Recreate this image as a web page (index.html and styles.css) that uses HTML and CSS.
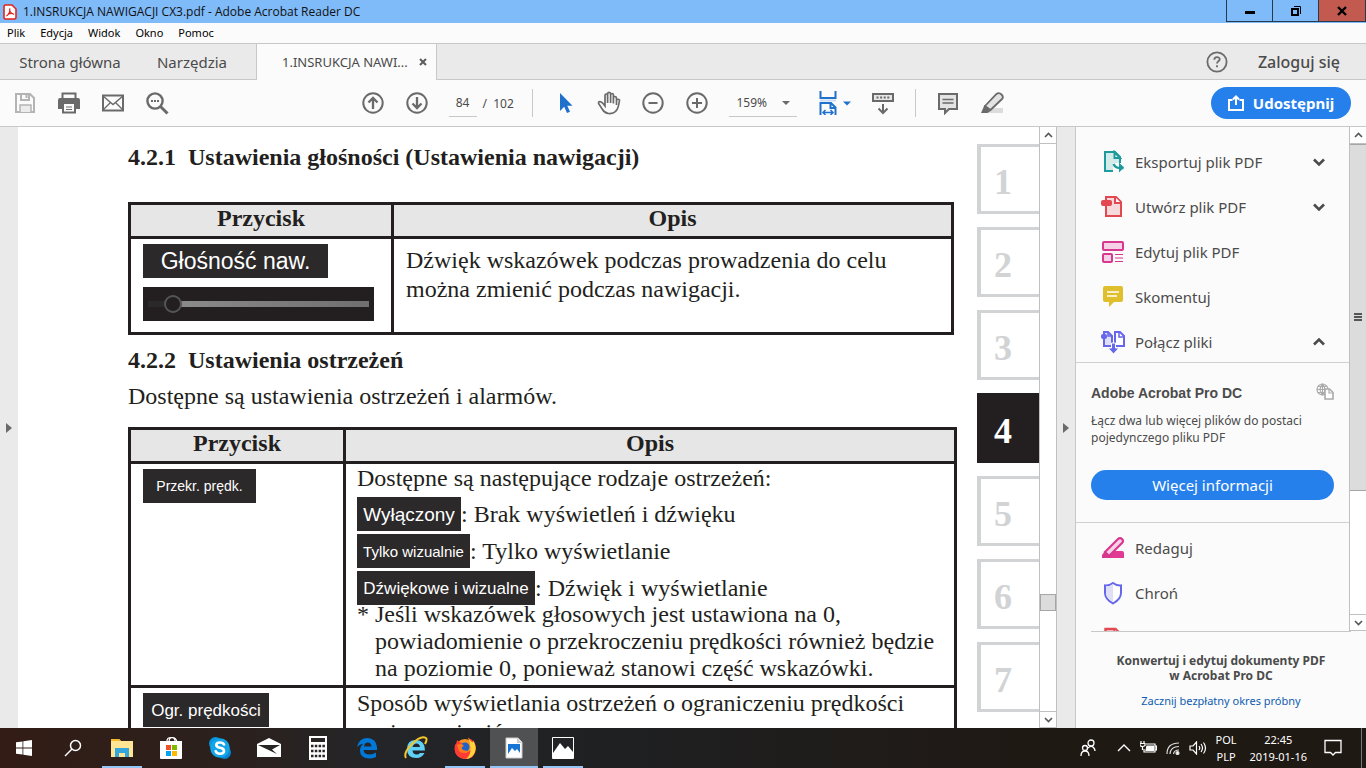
FILE: index.html
```html
<!DOCTYPE html>
<html lang="pl">
<head>
  <meta charset="UTF-8">
  <meta name="viewport" content="width=device-width, initial-scale=1.0">
  <title>1.INSRUKCJA NAWIGACJI CX3.pdf - Adobe Acrobat Reader DC</title>
  <link rel="stylesheet" href="styles.css">
</head>
<body>

  <!-- Pasek tytułu -->
  <header class="titlebar">
    <svg class="app-icon" width="14" height="16" viewBox="0 0 14 16"><path d="M2.5 1h6.500l4 4v8.500a1.500 1.500 0 0 1-1.500 1.500h-9A1.500 1.500 0 0 1 1 13.500v-11A1.500 1.500 0 0 1 2.500 1z" fill="#fff" stroke="#e2231a" stroke-width="1.600"/><path d="M3.500 12c3-2 3.500-5 3.300-7.500C6 7 8 10 11 10.200 8.500 9 5.500 9.500 3.500 12z" fill="none" stroke="#e2231a" stroke-width="1.200"/></svg>
    <span class="window-title">1.INSRUKCJA NAWIGACJI CX3.pdf - Adobe Acrobat Reader DC</span>
    <div class="window-buttons">
      <button aria-label="Minimalizuj"><svg width="12" height="12"><path d="M1 6h10v3H1z"/></svg></button>
      <button aria-label="Przywróć"><svg width="12" height="12" fill="none" stroke="#000"><path d="M2 4h6v6H2z" stroke-width="2"/><path d="M4 1.500h6.500V9"/></svg></button>
      <button class="close" aria-label="Zamknij"><svg width="12" height="12" stroke="#000" stroke-width="2.400"><path d="M2 2l8 8M10 2l-8 8"/></svg></button>
    </div>
  </header>

  <!-- Menu -->
  <nav class="menubar">
    <button>Plik</button>
    <button>Edycja</button>
    <button>Widok</button>
    <button>Okno</button>
    <button>Pomoc</button>
  </nav>

  <!-- Karty -->
  <div class="tabs">
    <button class="tab">Strona główna</button>
    <button class="tab tab-tools">Narzędzia</button>
    <div class="tab-active">
      <span>1.INSRUKCJA NAWI...</span>
      <button aria-label="Zamknij kartę"><svg width="8" height="8" stroke="#5c5c5c" stroke-width="2"><path d="M1 1l6 6M7 1L1 7"/></svg></button>
    </div>
    <div class="account">
      <button aria-label="Pomoc"><svg width="22" height="22" fill="none" stroke="#6b6b6b" stroke-width="1.800"><circle cx="11" cy="11" r="9.600"/><path d="M8.300 8.800c0-3.600 5.400-3.400 5.400-.5 0 2-2.700 2-2.700 4.200M11 14.200v2"/></svg></button>
      <button class="login">Zaloguj się</button>
    </div>
  </div>

  <!-- Pasek narzędzi -->
  <div class="toolbar">
    <div class="tools">
      <button aria-label="Zapisz"><svg width="24" height="24" fill="none" stroke="#b4b4b4" stroke-width="2"><path d="M3 3h14l4 4v14H3z"/><path d="M8 3v6h8V3M13.500 4v3"/><path d="M7 21v-7h11v7" fill="#ececec" stroke-width="1.500"/></svg></button>
      <button aria-label="Drukuj"><svg width="24" height="24"><path d="M5.500 7V2.500h13V7" fill="none" stroke="#6a6a6a" stroke-width="2"/><path d="M1 9q0-2 2-2h18q2 0 2 2v9h-4v-5H5v5H1z" fill="#6a6a6a"/><path d="M6 12h12v9.500H6z" fill="#fbfbfb" stroke="#6a6a6a" stroke-width="2"/><path d="M9 16h6M9 18.500h6" stroke="#6a6a6a"/></svg></button>
      <button aria-label="Wyślij"><svg width="24" height="24" fill="none" stroke="#6a6a6a"><path d="M2 4.500h20v15H2z" stroke-width="2"/><path d="M2 5l10 8.500L22 5M2 19l7.500-7.500M22 19l-7.500-7.500" stroke-width="1.400"/></svg></button>
      <button aria-label="Szukaj"><svg width="24" height="24" fill="none" stroke="#6a6a6a"><circle cx="10" cy="10" r="7.600" stroke-width="2.400"/><path d="M15.500 15.500l7 7" stroke-width="3"/><path d="M6 10h2M9 10h2M12 10h2" stroke-width="2"/></svg></button>
    </div>

    <div class="tools">
      <button aria-label="Poprzednia strona"><svg width="24" height="24" fill="none" stroke="#6a6a6a" stroke-width="2"><circle cx="12" cy="12" r="9.700"/><path d="M12 18V7M7.500 11.500L12 7l4.500 4.500" stroke-width="2.300"/></svg></button>
      <button aria-label="Następna strona"><svg width="24" height="24" fill="none" stroke="#6a6a6a" stroke-width="2"><circle cx="12" cy="12" r="9.700"/><path d="M12 6v11M7.500 12.500L12 17l4.500-4.500" stroke-width="2.300"/></svg></button>
      <div class="page-number">
        <input type="text" value="84" aria-label="Numer strony">
        <span>/&nbsp; 102</span>
      </div>
      <span class="separator"></span>
      <button aria-label="Zaznacz"><svg width="24" height="24"><path d="M7 2v18l4.200-4.200L14 22l3-1.300-2.700-5.900H19.500z" fill="#1f71cc"/></svg></button>
      <button aria-label="Rączka"><svg width="24" height="24" fill="#fbfbfb" stroke="#6a6a6a" stroke-width="1.700"><path d="M8 14V4.500q0-1.500 1.300-1.500t1.300 1.500V3q0-1.700 1.500-1.700T13.600 3v1q0-1.500 1.400-1.500T16.400 4v3q0-1.500 1.500-1.500t1.500 1.500L19.600 9q1.500-1.500 2.900 0-1 9-4 11.500-2.500 2.500-7 2-4-.5-6-4L1.700 12.700Q1 10.500 3 10.700 5 11 8 15zM10.600 4.500V12M13.600 4v8M16.400 6v6.500M19.500 8v6"/></svg></button>
      <button aria-label="Pomniejsz"><svg width="24" height="24" fill="none" stroke="#6a6a6a" stroke-width="2"><circle cx="12" cy="12" r="9.700"/><path d="M7.500 12h9"/></svg></button>
      <button aria-label="Powiększ"><svg width="24" height="24" fill="none" stroke="#6a6a6a" stroke-width="2"><circle cx="12" cy="12" r="9.700"/><path d="M7 12h10M12 7v10"/></svg></button>
      <div class="zoom">
        <select aria-label="Powiększenie"><option>159%</option></select>
      </div>
      <button class="fit" aria-label="Dopasuj szerokość"><svg width="36" height="24" fill="none" stroke="#1f71cc" stroke-width="2"><path d="M4.500 0v7h15V0M4.500 24V12H15l4.500 4.500V24M14.500 12v5h5"/><path d="M4 9.500h16" stroke="#c9def5"/><path d="M7 21.500h10M9.500 19L7 21.500 9.500 24M14.500 19l2.500 2.500-2.500 2.500" stroke-width="1.500"/><path d="M27 10.500h8L31 14.500z" fill="#1f71cc" stroke="none"/></svg></button>
      <button aria-label="Przewijanie"><svg width="24" height="24" fill="none" stroke="#6a6a6a" stroke-width="2"><rect x="2" y="3" width="20" height="7" fill="#e6e6e6"/><path d="M5.500 6.500h13" stroke-dasharray="2 1.600"/><path d="M12 13v9M7.500 17.500L12 22l4.500-4.500"/></svg></button>
      <span class="separator"></span>
      <button aria-label="Komentarz"><svg width="24" height="24"><path d="M3 3h18v15h-8l-4 4v-4H3z" fill="#e3e3e3" stroke="#6a6a6a" stroke-width="2"/><path d="M6.500 8.500h11M6.500 12h11" stroke="#6a6a6a" stroke-width="1.500"/></svg></button>
      <button aria-label="Zakreślacz"><svg width="24" height="24"><path d="M12 17h11v5H6z" fill="#dcdcdc"/><path d="M5 15L16.500 3Q19 1 21.500 3.500T22 8L10.500 19z" fill="#e3e3e3" stroke="#6a6a6a" stroke-width="1.800"/><path d="M4.500 14l6 6-3 2H1z" fill="#6a6a6a"/></svg></button>
    </div>

    <button class="share">
      <svg width="16" height="16" fill="none" stroke="#fff" stroke-width="2"><path d="M4.500 5H1v10h14V5h-3.500M8 10V2M5 4.500l3-3 3 3"/></svg>
      Udostępnij
    </button>
  </div>

  <main class="workspace">
    <button class="side-strip" aria-label="Pokaż panel nawigacji"><span class="triangle"></span></button>

    <!-- Strona dokumentu -->
    <div class="page">
      <article class="manual">
        <h2><span class="section-number">4.2.1</span>Ustawienia głośności (Ustawienia nawigacji)</h2>
        <table class="table-volume">
          <thead>
            <tr><th class="col-button">Przycisk</th><th>Opis</th></tr>
          </thead>
          <tbody>
            <tr>
              <td>
                <span class="label label-volume">Głośność naw.</span>
                <input class="volume" type="range" value="8" aria-label="Głośność nawigacji">
              </td>
              <td class="volume-text">Dźwięk wskazówek podczas prowadzenia do celu można zmienić podczas nawigacji.</td>
            </tr>
          </tbody>
        </table>

        <h2><span class="section-number">4.2.2</span>Ustawienia ostrzeżeń</h2>
        <p class="intro">Dostępne są ustawienia ostrzeżeń i alarmów.</p>
        <table class="table-warnings">
          <thead>
            <tr><th class="col-button">Przycisk</th><th>Opis</th></tr>
          </thead>
          <tbody>
            <tr>
              <td><span class="label label-speed">Przekr. prędk.</span></td>
              <td>
                <p>Dostępne są następujące rodzaje ostrzeżeń:</p>
                <ul class="warning-types">
                  <li><span class="label label-off">Wyłączony</span>: Brak wyświetleń i dźwięku</li>
                  <li><span class="label label-visual">Tylko wizualnie</span>: Tylko wyświetlanie</li>
                  <li><span class="label label-both">Dźwiękowe i wizualne</span>: Dźwięk i wyświetlanie</li>
                </ul>
                <div class="note"><span>*</span><p>Jeśli wskazówek głosowych jest ustawiona na 0, powiadomienie o przekroczeniu prędkości również będzie na poziomie 0, ponieważ stanowi część wskazówki.</p></div>
              </td>
            </tr>
            <tr>
              <td><span class="label label-limit">Ogr. prędkości</span></td>
              <td class="limit-text">Sposób wyświetlania ostrzeżeń o ograniczeniu prędkości można zmienić.</td>
            </tr>
          </tbody>
        </table>
      </article>

      <nav class="chapters">
        <a href="#">1</a>
        <a href="#">2</a>
        <a href="#">3</a>
        <a href="#" class="current">4</a>
        <a href="#">5</a>
        <a href="#">6</a>
        <a href="#">7</a>
      </nav>
    </div>

    <div class="scrollbar">
      <button aria-label="W górę"><svg width="9" height="6" fill="none" stroke="#555" stroke-width="1.600"><path d="M1 5l3.500-3.500L8 5"/></svg></button>
      <span class="track-before"></span>
      <span class="thumb"></span>
      <span class="track-after"></span>
      <button aria-label="W dół"><svg width="9" height="6" fill="none" stroke="#555" stroke-width="1.600"><path d="M1 1l3.500 3.500L8 1"/></svg></button>
    </div>

    <button class="side-strip strip-right" aria-label="Ukryj panel narzędzi"><span class="triangle"></span></button>

    <!-- Panel narzędzi -->
    <aside class="panel">
      <div class="panel-scroll">
        <div class="panel-content">
          <ul class="tool-list">
            <li>
              <svg width="24" height="24" fill="none" stroke="#1d9a9b" stroke-width="2"><path d="M4 2h10l5 5v14H4z" fill="#d5ebe9"/><path d="M19 8h-5.500V2z" fill="#fff"/><path d="M12 13h12v10H12z" fill="#fbfbfb" stroke="none"/><path d="M4 21h8" /><path d="M12.500 14q2 4 6 4h4" stroke-width="2.400"/><path d="M18 12.500v10l5-5z" fill="#1d9a9b" stroke="none"/></svg>
              <button>Eksportuj plik PDF</button>
              <svg class="chevron" width="14" height="14" fill="none" stroke="#4b4b4b" stroke-width="2.600"><path d="M2 4.500l5 5 5-5"/></svg>
            </li>
            <li>
              <svg width="24" height="24" fill="none" stroke="#e34850" stroke-width="2"><path d="M5 10v11h15V7l-5-5H5z" fill="#f6d9da"/><path d="M14 2v6h6" fill="#fff"/><rect x="0" y="5" width="11" height="6" rx="2" fill="#e34850" stroke="none"/></svg>
              <button>Utwórz plik PDF</button>
              <svg class="chevron" width="14" height="14" fill="none" stroke="#4b4b4b" stroke-width="2.600"><path d="M2 4.500l5 5 5-5"/></svg>
            </li>
            <li>
              <svg width="24" height="24" fill="#f5d0e6" stroke="#d83790" stroke-width="2"><rect x="2" y="2" width="20" height="8" rx="1"/><rect x="2" y="14" width="9" height="8" rx="1"/><path d="M14 14.500h8M14 18h8M14 21.500h8" stroke-width="1.200"/></svg>
              <button>Edytuj plik PDF</button>
            </li>
            <li>
              <svg width="24" height="24"><path d="M4 1h16q2 0 2 2v12q0 2-2 2h-7l-5 5v-5H4q-2 0-2-2V3q0-2 2-2z" fill="#dfbf2b"/><path d="M6 7h12M6 11h10" stroke="#fff" stroke-width="1.500"/></svg>
              <button>Skomentuj</button>
            </li>
            <li>
              <svg width="24" height="24" fill="none" stroke="#6767ec" stroke-width="2"><path d="M3 2h4l4 4v10H3z" fill="#e0dff8"/><path d="M14 2h5l4 4v10h-9z" fill="#fff"/><path d="M18 2v5h5M7 2v4h4" stroke-width="1.500"/><rect x="0" y="4" width="6" height="5" rx="2" fill="#6767ec" stroke="none"/><path d="M10.500 13h4v5h3.500l-5.500 6L7 18h3.500z" fill="#6767ec" stroke="#fbfbfb" stroke-width="1"/></svg>
              <button>Połącz pliki</button>
              <svg class="chevron" width="14" height="14" fill="none" stroke="#4b4b4b" stroke-width="2.600"><path d="M2 9.500l5-5 5 5"/></svg>
            </li>
          </ul>

          <section class="promo">
            <div class="promo-head">
              <h3>Adobe Acrobat Pro DC</h3>
              <svg width="18" height="18" fill="none" stroke="#aaa" stroke-width="1.200"><circle cx="6.500" cy="6.500" r="5.500"/><path d="M1 6.500h11M2 3.500h9M2 9.500h7M6.500 1v11M6.500 1q-5 5.500 0 11M6.500 1q5 5.500 0 11"/><path d="M9 6h4.500L17 9.500V16H9z" fill="#fff" stroke-width="1.600"/><path d="M13 6v4h4"/></svg>
            </div>
            <p>Łącz dwa lub więcej plików do postaci pojedynczego pliku PDF</p>
            <button>Więcej informacji</button>
          </section>

          <ul class="tool-list">
            <li>
              <svg width="24" height="24"><path d="M14 15h7q2 0 2 2v5H5z" fill="#e03a94"/><path d="M4 16L17 3q2-2 4 0t0 4L8 20z" fill="#f7d1e5" stroke="#d83790" stroke-width="2.200"/><path d="M4 15l6 6-3 1H1v-3z" fill="#d83790"/></svg>
              <button>Redaguj</button>
            </li>
            <li>
              <svg width="24" height="24"><path d="M12 2q4 3 8 2.500V12q0 6-8 10.500Q4 18 4 12V4.500Q8 5 12 2z" fill="#fff" stroke="#6767ec" stroke-width="2"/><path d="M12 3v18Q5 17 5 12V5.500Q9 5.500 12 3z" fill="#e0dff8"/></svg>
              <button>Chroń</button>
            </li>
            <li>
              <svg width="24" height="24"><path d="M4.500 22V3h10l5 5v14z" fill="#f6d9da" stroke="#e34850" stroke-width="2.400"/><path d="M13.500 3v6h6" fill="#fff" stroke="#e34850" stroke-width="2"/></svg>
            </li>
          </ul>
        </div>
        <div class="scrollbar panel-bar">
          <button aria-label="W górę"><svg width="9" height="6" fill="none" stroke="#555" stroke-width="1.600"><path d="M1 5l3.500-3.500L8 5"/></svg></button>
          <span class="thumb"><svg width="8" height="8" stroke="#555" stroke-width="2"><path d="M0 1h8M0 4h8M0 7h8"/></svg></span>
          <span class="track-after"></span>
          <button aria-label="W dół"><svg width="9" height="6" fill="none" stroke="#555" stroke-width="1.600"><path d="M1 1l3.500 3.500L8 1"/></svg></button>
        </div>
      </div>
      <div class="trial">
        <strong>Konwertuj i edytuj dokumenty PDF<br>w Acrobat Pro DC</strong>
        <a href="#">Zacznij bezpłatny okres próbny</a>
      </div>
    </aside>
  </main>

  <!-- Pasek zadań -->
  <footer class="taskbar">
    <div class="apps">
      <button aria-label="Start"><svg width="16" height="16" fill="#fff"><path d="M0 2.300l6.500-.9v6.200H0zM7.300 1.300L16 0v7.600H7.300zM0 8.400h6.500v6.200L0 13.700zM7.300 8.400H16V16l-8.700-1.300z"/></svg></button>
      <button aria-label="Szukaj"><svg width="18" height="18" fill="none" stroke="#fff" stroke-width="1.500"><circle cx="11.500" cy="6.500" r="5"/><path d="M8 10l-7 7"/></svg></button>
      <button class="open" aria-label="Eksplorator plików"><svg width="22" height="20"><path d="M0 1h8l2 2h12v16H0z" fill="#ffe594"/><path d="M0 1h8l2 2H0z" fill="#f7b928"/><path d="M4 19v-9h14v9h-4v-4H8v4z" fill="#35a5dd"/></svg></button>
      <button aria-label="Sklep"><svg width="24" height="24"><path d="M8 8V5q0-3.500 4-3.500T16 5v3M10 6q0-4.500 3.500-4.500T18 6" fill="none" stroke="#fff" stroke-width="1.200"/><path d="M1 5h22v17q0 1-1 1H2q-1 0-1-1z" fill="#fff"/><path d="M7 9h5v5H7z" fill="#f05125"/><path d="M13 9h5v5h-5z" fill="#7fba00"/><path d="M7 15h5v5H7z" fill="#00a4ef"/><path d="M13 15h5v5h-5z" fill="#ffb900"/></svg></button>
      <button aria-label="Skype"><svg width="24" height="24"><circle cx="7.500" cy="7.500" r="6.500" fill="#0796dc"/><circle cx="16.500" cy="16.500" r="6.500" fill="#0784d4"/><circle cx="12" cy="12" r="9.800" fill="#12a5e8"/><path d="M16 8.500Q15 6.500 12 6.500 8.300 6.500 8.300 9q0 2 3.700 2.800 4 .7 4 3.200 0 2.700-4 2.700-3.300 0-4.300-2.500" fill="none" stroke="#fff" stroke-width="2.600" stroke-linecap="round"/></svg></button>
      <button aria-label="Poczta"><svg width="24" height="20"><path d="M0 6L12 0l12 6v13H0z" fill="#fff"/><path d="M1 7h22l-8 4.500 5 4.500z" fill="#292424"/></svg></button>
      <button aria-label="Kalkulator"><svg width="18" height="24"><path d="M0 0h18v24H0z" fill="#fff"/><path d="M2 2h14v4H2z" fill="#292424"/><path d="M2 10h14M2 15h14M2 20h14" stroke="#292424" stroke-width="2.500" stroke-dasharray="2.500 1.300"/></svg></button>
      <button aria-label="Edge"><svg width="22" height="22"><path d="M1 10Q3 1 11.500 1 20 1.500 21 10v3H7.500q.5 4.500 6 4.500 3.500 0 6.500-2v4.500q-3 1.500-7.500 1.500Q4 21 4 13.500q0-4 3.500-7Q3.500 7 1 10zM8 9.500h7.500Q15 5.500 11.800 5.500T8 9.500z" fill="#0078d7"/></svg></button>
      <button aria-label="Internet Explorer"><svg width="24" height="24"><path d="M3 13Q3 4 12 4q9 .5 9 10.500H8.500q.5 4 4 4 2.500 0 3.500-1.500h4.500Q18 22 12.500 22 3 22 3 13zm5.500-2H16q-.5-3.500-3.500-3.500T8.500 11z" fill="#5fd0f7"/><path d="M2 22Q-1 17 8 8T22 2q1.500 1.500-1 6" fill="none" stroke="#f5c62c" stroke-width="2"/></svg></button>
      <button class="open" aria-label="Firefox"><svg width="24" height="24"><circle cx="12" cy="13" r="10" fill="#f7931e"/><path d="M2 8q1 2 2-4 2 2 5 3l2 3-3 4 5 3 5-3q2-6-3-12 8 2 8 11-1 10-11 10Q2 22 1.500 13z" fill="#ff3b36"/><path d="M15 1q2 4 4 5t1-2q4 7 2 12-3 7-9 7 8-6 2-22z" fill="#ffd43a"/><circle cx="12" cy="11" r="4.500" fill="#1f62c9"/><path d="M4 9q4-3 7 1-4 1-1 4l5 1q-5 4-9 0z" fill="#ff7b1a"/></svg></button>
      <button class="open active" aria-label="Obraz"><svg width="18" height="22"><path d="M1 1h12l4 4v16H1z" fill="#fff" stroke="#ccc"/><path d="M12 1v5h5" fill="#ccc"/><path d="M3 7h12v11H3z" fill="#1574d4"/><path d="M3 17l4-6 3 3 2-2 3 4v2H3z" fill="#fff"/></svg></button>
      <button class="open" aria-label="Zdjęcia"><svg width="22" height="22"><path d="M.5.500h21v21H.500z" fill="#222326" stroke="#fff"/><path d="M1 16l7-10 5 6 3-3 5 6v6H1z" fill="#fff"/></svg></button>
    </div>
    <div class="tray">
      <svg width="16" height="18" fill="none" stroke="#fff" stroke-width="1.300"><circle cx="11" cy="4" r="3"/><circle cx="5" cy="9" r="2.500"/><path d="M1 17q0-5 4-5t4 5M8 9q3-3 5.500-.5Q15 10 15 12"/></svg>
      <svg width="14" height="10" fill="none" stroke="#fff" stroke-width="1.400"><path d="M1 8l6-6 6 6"/></svg>
      <svg width="17" height="14" fill="none" stroke="#fff" stroke-width="1.200"><path d="M6 3h9v8H4V8M15 5h1.500v4H15"/><path d="M7 5h6.500v4.500H6z" fill="#fff"/><path d="M1 0v2M4 0v2M0 2.500h5v2q-2.500 2-5 0zM2.500 5v4"/></svg>
      <svg width="14" height="14" fill="none" stroke="#ddd" stroke-width="1.200"><path d="M1 13Q1 2 13 2M4 13Q4.500 5.500 13 5.500M7.500 13Q8 9 13 9"/><circle cx="11.500" cy="12" r="1.500" fill="#fff"/></svg>
      <svg width="18" height="14" fill="none" stroke="#fff" stroke-width="1.200"><path d="M1 5h3l3.500-4v12L4 9H1zM10 5q1.500 2 0 4M12 3q3 4 0 8M14.500 1.500q4 5.500 0 11"/></svg>
      <div class="language">POL<br>PLP</div>
      <div class="clock">22:45<br>2019-01-16</div>
      <svg class="notifications" width="18" height="18" fill="none" stroke="#fff" stroke-width="1.300"><path d="M1 1.500h16v12h-5.500L9 16l-2.500-2.500H1z"/></svg>
      <span class="show-desktop"></span>
    </div>
  </footer>

</body>
</html>
```
FILE: styles.css
```css
* {
  margin: 0;
  padding: 0;
  box-sizing: border-box;
}

body {
  display: flex;
  flex-direction: column;
  height: 100vh;
  overflow: hidden;
  font-family: "Noto Sans", "Open Sans", sans-serif;
  font-size: 12px;
  color: #4b4b4b;
  background-color: #fbfbfb;
}

button,
input,
select {
  font: inherit;
  color: inherit;
  background: none;
  border: none;
}

ul {
  list-style: none;
}

svg {
  display: block;
  flex-shrink: 0;
}

/* Pasek tytułu */
.titlebar {
  display: flex;
  align-items: center;
  height: 23px;
  padding-left: 3px;
  background-color: #7fbaf9;
  color: #111;
}

.window-title {
  flex: 1;
  padding-left: 6px;
  font-family: "Open Sans", sans-serif;
}

.window-buttons {
  display: flex;
  align-self: flex-start;
  height: 22px;
  border: 1px solid #26394d;
  border-top: none;
}

.window-buttons button {
  display: flex;
  align-items: center;
  justify-content: center;
  width: 46px;
  border-right: 1px solid #26394d;
}

.window-buttons .close {
  background-color: #c35a50;
  border-right: none;
}

/* Menu */
.menubar {
  display: flex;
  align-items: center;
  gap: 15px;
  height: 21px;
  padding: 0 7px 2px;
  border-bottom: 1px solid #c8c8c8;
  color: #000;
  font-size: 11px;
}

/* Karty */
.tabs {
  display: flex;
  height: 36px;
  background-color: #eaeaea;
  font-size: 15px;
}

.tabs > * {
  border-bottom: 1px solid #c8c8c8;
}

.tab {
  width: 140px;
  white-space: nowrap;
}

.tab-tools {
  width: 116px;
  padding-right: 12px;
}

.tab-active {
  display: flex;
  align-items: center;
  justify-content: space-between;
  width: 181px;
  padding: 0 9px 0 25px;
  background-color: #fbfbfb;
  border: 1px solid #c8c8c8;
  border-width: 0 1px;
  font-size: 13px;
}

.account {
  display: flex;
  flex: 1;
  align-items: center;
  justify-content: flex-end;
  gap: 30px;
  padding-right: 26px;
}

.login {
  font-size: 16px;
  font-weight: 500;
}

/* Pasek narzędzi */
.toolbar {
  display: grid;
  grid-template-columns: 1fr auto 1fr;
  align-items: center;
  height: 47px;
  padding: 0 15px 0 13px;
  border-bottom: 1px solid #c8c8c8;
}

.tools {
  display: flex;
  align-items: center;
  gap: 20px;
}

.page-number {
  display: flex;
  align-items: center;
  width: 63px;
  gap: 6px;
  white-space: nowrap;
}

.page-number input {
  width: 28px;
  height: 28px;
  border-bottom: 1px solid #c8c8c8;
  text-align: center;
}

.separator {
  width: 1px;
  height: 28px;
  background-color: #c8c8c8;
}

.zoom {
  position: relative;
  width: 68px;
  border-bottom: 1px solid #c8c8c8;
}

.zoom select {
  width: 100%;
  height: 27px;
  padding-left: 8px;
  appearance: none;
}

.zoom::after {
  content: "";
  position: absolute;
  top: 12px;
  right: 7px;
  border: 4px solid transparent;
  border-top-color: #6a6a6a;
  border-bottom: none;
}

.fit {
  margin: 0 -1px 0 -1px;
}

.share {
  display: flex;
  align-items: center;
  justify-content: center;
  justify-self: end;
  gap: 9px;
  width: 140px;
  height: 32px;
  border-radius: 16px;
  background-color: #2680eb;
  color: #fff;
  font-size: 15px;
  font-weight: bold;
}

/* Obszar roboczy */
.workspace {
  display: flex;
  flex: 1;
  min-height: 0;
}

.side-strip {
  display: flex;
  align-items: center;
  justify-content: center;
  width: 18px;
  background-color: #eaeaea;
}

.strip-right {
  width: 19px;
  border-right: 1px solid #c8c8c8;
}

.triangle {
  border: 5px solid transparent;
  border-left: 6px solid #6a6a6a;
  border-right: none;
}

/* Strona dokumentu */
.page {
  display: flex;
  flex: 1;
  gap: 20px;
  padding: 16px 0 0 110px;
  overflow: hidden;
  background-color: #fff;
  color: #231f20;
  font-family: "Liberation Serif", serif;
  font-size: 24px;
  line-height: 28px;
}

.manual {
  flex: 1;
}

.manual h2 {
  display: flex;
  font-size: 24px;
}

.section-number {
  width: 60px;
}

.intro {
  margin-top: 8px;
}

.manual table {
  border-collapse: collapse;
  table-layout: fixed;
}

.table-volume {
  width: calc(100% - 3px);
  margin: 31px 0 11px;
}

.table-warnings {
  width: 100%;
  margin-top: 17px;
}

.table-volume .col-button {
  width: 263px;
}

.table-warnings .col-button {
  width: 215px;
}

.manual th,
.manual td {
  border: 3px solid #231f20;
}

.manual th {
  height: 34px;
  padding-bottom: 4px;
  line-height: 27px;
  background-color: #e6e6e6;
}

.manual td {
  padding: 1px 11px 0;
  line-height: 27px;
  vertical-align: top;
}

.manual td:first-child {
  padding: 5px 12px 0;
}

.table-volume tbody tr {
  height: 96px;
}

.table-warnings tbody tr {
  height: 224px;
}

.manual .volume-text {
  padding: 7px 12px 0;
  line-height: 29px;
}

.manual .limit-text {
  line-height: 29px;
}

.label {
  display: flex;
  align-items: center;
  justify-content: center;
  height: 34px;
  background-color: #2b292a;
  color: #fff;
  font-family: "Liberation Sans Narrow", "Liberation Sans", sans-serif;
  white-space: nowrap;
}

.label-volume {
  width: 185px;
  font-size: 23px;
}

.label-speed {
  width: 113px;
  font-size: 14px;
}

.label-off {
  width: 104px;
  font-size: 19px;
}

.label-visual {
  width: 113px;
  font-size: 15px;
}

.label-both {
  width: 178px;
  font-size: 17px;
}

.label-limit {
  width: 126px;
  font-size: 17px;
}

.volume {
  display: block;
  width: 231px;
  height: 34px;
  margin-top: 9px;
  padding: 0 5px;
  background-color: #231f20;
  appearance: none;
}

.volume::-webkit-slider-runnable-track {
  height: 6px;
  background: linear-gradient(90deg, #2b292a 8%, #8a8a8a 16%, #6f6f6f);
}

.volume::-webkit-slider-thumb {
  width: 18px;
  height: 18px;
  margin-top: -6px;
  border: 2px solid #555;
  border-radius: 50%;
  background-color: #231f20;
  appearance: none;
}

.warning-types {
  display: flex;
  flex-direction: column;
  gap: 3px;
  margin-top: 5px;
}

.warning-types li {
  display: flex;
  align-items: center;
}

.note {
  display: flex;
  margin-top: -4px;
}

.note span {
  width: 18px;
}

.note p {
  flex: 1;
}

.chapters {
  display: flex;
  flex-direction: column;
  gap: 13px;
  width: 62px;
  padding-top: 1px;
}

.chapters a {
  display: flex;
  flex-shrink: 0;
  align-items: center;
  height: 70px;
  padding: 6px 0 0 13px;
  border: 3px solid #d1d3d4;
  border-width: 3px 0 3px 4px;
  color: #d1d3d4;
  font-size: 36px;
  font-weight: bold;
  text-decoration: none;
}

.chapters .current {
  background-color: #231f20;
  border-color: #231f20;
  color: #fff;
}

/* Paski przewijania */
.scrollbar {
  display: flex;
  flex-direction: column;
  width: 18px;
  border: 1px solid #c0c0c0;
  border-width: 0 1px;
  background-color: #fff;
}

.scrollbar button {
  display: flex;
  align-items: center;
  justify-content: center;
  height: 17px;
  border: 1px solid #c0c0c0;
  border-width: 0 0 1px;
}

.scrollbar button:last-child {
  border-width: 1px 0;
}

.thumb {
  display: flex;
  align-items: center;
  justify-content: center;
  height: 17px;
  border: 1px solid #a6a6a6;
  background-color: #dcdcdc;
}

.track-before {
  flex: 450;
}

.track-after {
  flex: 100;
}

/* Panel narzędzi */
.panel {
  display: flex;
  flex-direction: column;
  width: 290px;
}

.panel-scroll {
  display: flex;
  flex: 1;
  min-height: 0;
}

.panel-content {
  flex: 1;
  overflow: hidden;
}

.panel-bar {
  width: 17px;
  border-right: none;
}

.panel-bar .thumb {
  flex: 347;
  border-width: 1px 0;
}

.panel-bar .track-after {
  flex: 124;
}

.tool-list {
  display: flex;
  flex-direction: column;
  gap: 21px;
  padding: 23px 23px 8px 25px;
}

.tool-list li {
  display: flex;
  align-items: center;
  gap: 10px;
  height: 24px;
  font-size: 15px;
}

.chevron {
  margin-left: auto;
}

.promo {
  height: 161px;
  padding: 20px 15px 0;
  border: 1px solid #d0d0d0;
  border-width: 1px 0;
}

.promo + .tool-list {
  padding-top: 13px;
}

.promo-head {
  display: flex;
  justify-content: space-between;
}

.promo h3 {
  font-family: "Liberation Sans", sans-serif;
  font-size: 14px;
  line-height: 20px;
}

.promo p {
  margin-top: 9px;
  line-height: 17px;
}

.promo button {
  width: 100%;
  height: 30px;
  margin-top: 24px;
  border-radius: 15px;
  background-color: #2680eb;
  color: #fff;
  font-size: 15px;
}

.trial {
  display: flex;
  flex-direction: column;
  align-items: center;
  gap: 10px;
  height: 97px;
  margin: 0 15px;
  padding-top: 21px;
  border-top: 1px solid #c8c8c8;
  line-height: 15px;
  text-align: center;
}

.trial a {
  color: #0d5cb0;
  font-size: 11px;
  text-decoration: none;
}

/* Pasek zadań */
.taskbar {
  display: flex;
  justify-content: space-between;
  height: 40px;
  background: linear-gradient(90deg, #331c15, #2a211e 18%, #242528 28%, #1f2022 45%, #1f1914 75%, #1f1914);
  color: #fff;
}

.apps {
  display: flex;
  gap: 1px;
}

.apps button {
  position: relative;
  display: flex;
  align-items: center;
  justify-content: center;
  width: 48px;
}

.open::after {
  content: "";
  position: absolute;
  right: 4px;
  bottom: 0;
  left: 4px;
  height: 2px;
  background-color: #93c5f5;
}

.apps .active {
  background-color: #505153;
}

.active::after {
  right: 0;
  left: 0;
}

.tray {
  display: flex;
  align-items: center;
  gap: 9px;
}

.tray svg:first-child {
  margin-right: 12px;
}

.language,
.clock {
  font-size: 11px;
  line-height: 17px;
  text-align: center;
}

.clock {
  padding: 0 8px 0 4px;
}

.show-desktop {
  align-self: stretch;
  width: 5px;
  margin-left: 10px;
  border-left: 1px solid #777;
}
```
